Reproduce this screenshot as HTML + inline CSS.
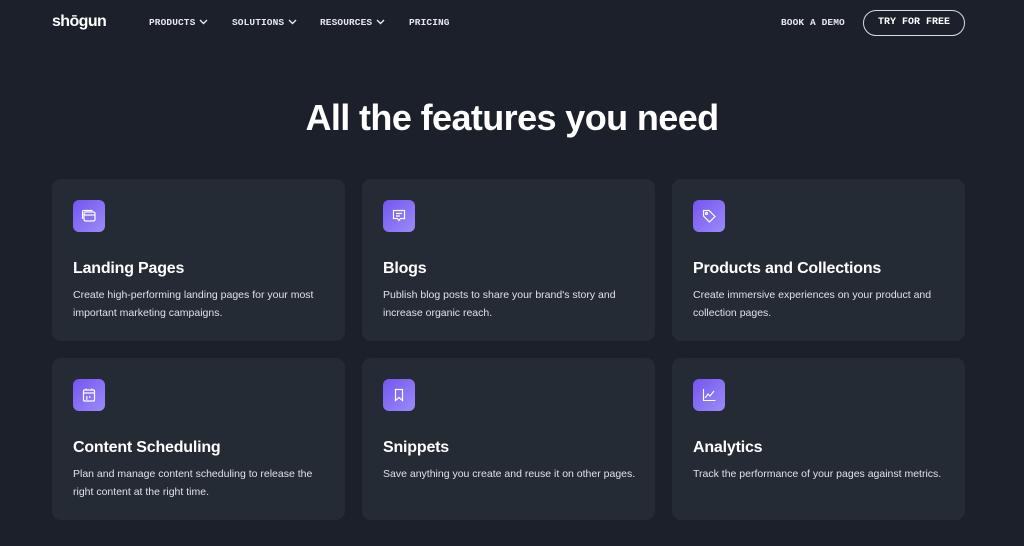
<!DOCTYPE html>
<html><head><style>
*{margin:0;padding:0;box-sizing:border-box}
body{width:1024px;height:546px;background:#1b202a;font-family:"Liberation Sans",sans-serif;color:#fff;position:relative;overflow:hidden}
.nav{position:absolute;top:0;left:0;right:0;height:46px}
.logo{position:absolute;left:52px;top:13px;font-size:16px;font-weight:bold;letter-spacing:-0.6px}
.mi{position:absolute;top:17px;font-family:"Liberation Mono",monospace;font-size:9.5px;font-weight:bold;color:#e6e8ec;letter-spacing:0.1px}
.mi svg{vertical-align:middle;margin-left:4px}
.btn{position:absolute;left:863px;top:10px;width:102px;height:26px;border:1.5px solid #d8dbe0;border-radius:13px;text-align:center;line-height:23px;font-family:"Liberation Mono",monospace;font-size:10px;font-weight:bold}
h1{position:absolute;top:97px;width:100%;text-align:center;font-size:36px;font-weight:bold;letter-spacing:-0.6px}
.card{position:absolute;width:293px;height:162px;background:#252b35;border-radius:9px}
.ic{position:absolute;left:21px;top:21px;width:32px;height:32px;border-radius:6px;background:linear-gradient(135deg,#7355f0,#9b8cf8);display:flex;align-items:center;justify-content:center}
.t{position:absolute;left:21px;top:81px;font-size:16px;font-weight:bold;letter-spacing:-0.2px}
.d{position:absolute;left:21px;top:107px;width:255px;font-size:10.5px;line-height:18px;color:#dfe2e6}
</style></head><body>
<div class="nav">
<div class="logo">shōgun</div>
<div class="mi" style="left:149px">PRODUCTS<svg width="9" height="6"><path d="M1 1l3.5 3.5L8 1" stroke="#e6e8ec" stroke-width="1.4" fill="none"/></svg></div>
<div class="mi" style="left:232px">SOLUTIONS<svg width="9" height="6"><path d="M1 1l3.5 3.5L8 1" stroke="#e6e8ec" stroke-width="1.4" fill="none"/></svg></div>
<div class="mi" style="left:320px">RESOURCES<svg width="9" height="6"><path d="M1 1l3.5 3.5L8 1" stroke="#e6e8ec" stroke-width="1.4" fill="none"/></svg></div>
<div class="mi" style="left:409px">PRICING</div>
<div class="mi" style="left:781px">BOOK A DEMO</div>
<div class="btn">TRY FOR FREE</div>
</div>
<h1>All the features you need</h1>

<div class="card" style="left:52px;top:179px"><div class="ic"><svg width="16" height="16" fill="none" stroke="#fff" stroke-width="1.2"><rect x="3" y="4" width="11" height="9" rx="1.5"/><path d="M3 7h11M1.5 11V3.5a1 1 0 0 1 1-1h9"/></svg></div><div class="t">Landing Pages</div><div class="d">Create high-performing landing pages for your most important marketing campaigns.</div></div>
<div class="card" style="left:362px;top:179px"><div class="ic"><svg width="16" height="16" fill="none" stroke="#fff" stroke-width="1.2"><path d="M2.5 2.5h11v8h-4l-1.5 2-1.5-2h-4z"/><path d="M5 5.5h6M5 8h4"/></svg></div><div class="t">Blogs</div><div class="d">Publish blog posts to share your brand's story and increase organic reach.</div></div>
<div class="card" style="left:672px;top:179px"><div class="ic"><svg width="16" height="16" fill="none" stroke="#fff" stroke-width="1.2"><path d="M2.5 2.5h5.5l6 6-5.5 5.5-6-6z"/><circle cx="5.5" cy="5.5" r="1"/></svg></div><div class="t">Products and Collections</div><div class="d">Create immersive experiences on your product and collection pages.</div></div>
<div class="card" style="left:52px;top:358px"><div class="ic"><svg width="16" height="16" fill="none" stroke="#fff" stroke-width="1.2"><rect x="2.5" y="3" width="11" height="11" rx="1"/><path d="M2.5 6h11M5 1.5v2M11 1.5v2"/><path d="M5 10h1.5M8 10h1.5M5 12h1.5" stroke-width="1.4"/></svg></div><div class="t">Content Scheduling</div><div class="d">Plan and manage content scheduling to release the<br>right content at the right time.</div></div>
<div class="card" style="left:362px;top:358px"><div class="ic"><svg width="16" height="16" fill="none" stroke="#fff" stroke-width="1.2"><path d="M4.5 2.5h7v11l-3.5-3-3.5 3z"/></svg></div><div class="t">Snippets</div><div class="d">Save anything you create and reuse it on other pages.</div></div>
<div class="card" style="left:672px;top:358px"><div class="ic"><svg width="16" height="16" fill="none" stroke="#fff" stroke-width="1.1"><path d="M2.5 2v11.5h12"/><path d="M4 11l3-4 2 2 4-5"/></svg></div><div class="t">Analytics</div><div class="d">Track the performance of your pages against metrics.</div></div>
</body></html>
